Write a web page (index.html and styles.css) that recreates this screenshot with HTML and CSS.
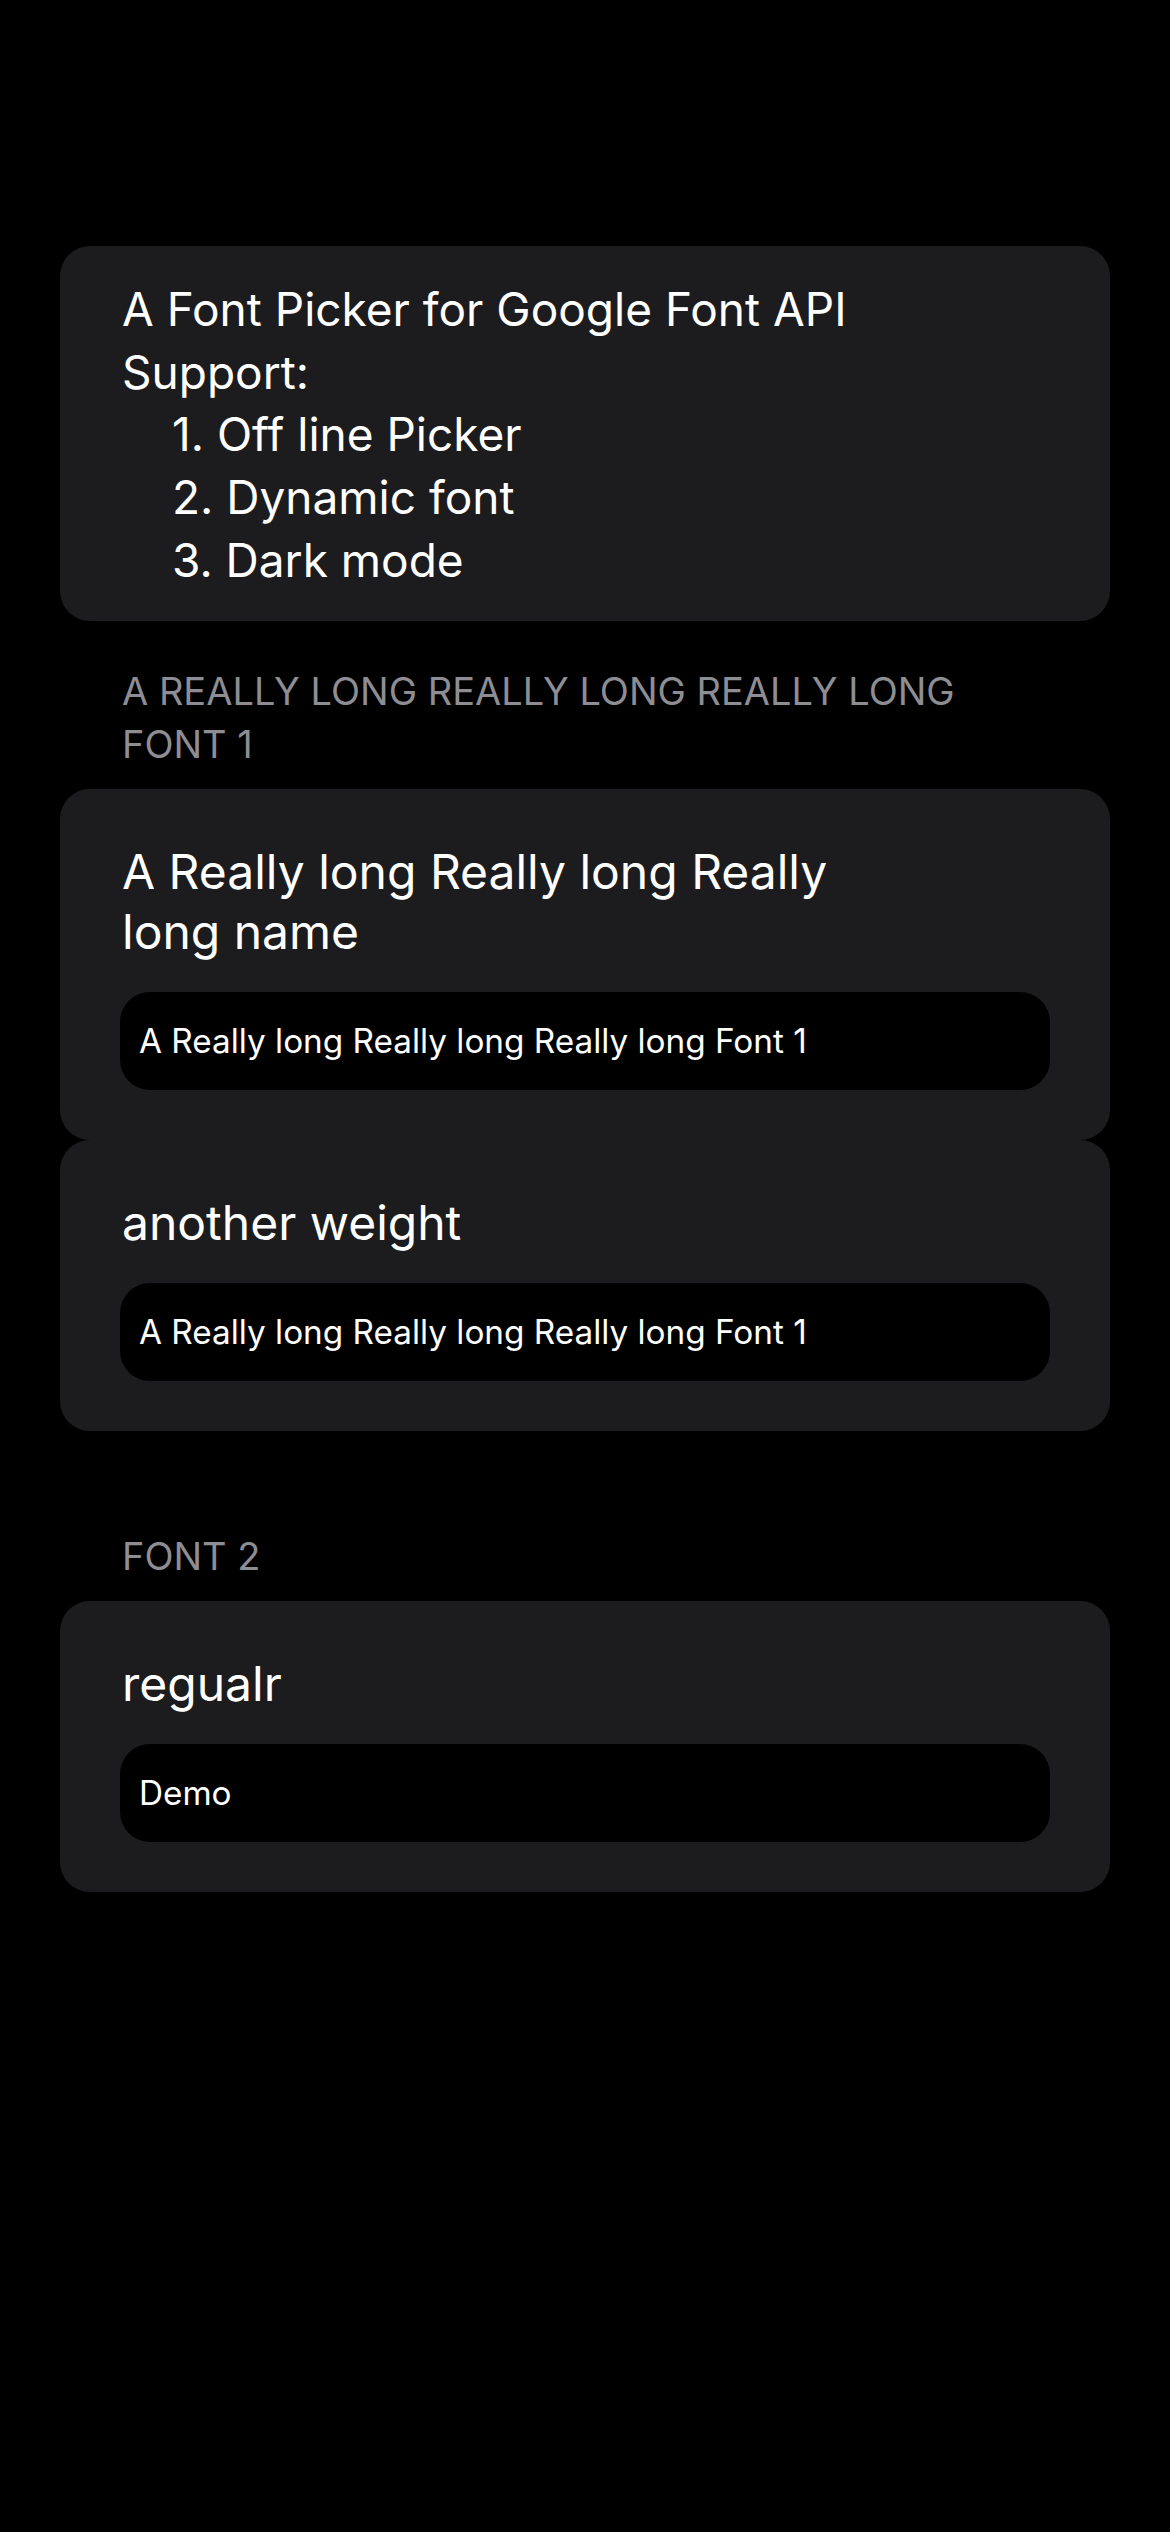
FILE: index.html
```html
<!DOCTYPE html>
<html lang="en">
<head>
<meta charset="utf-8">
<title>Font Picker</title>
<link rel="stylesheet" href="styles.css">
</head>
<body>
<main class="page">
  <section class="card intro">
    <p class="intro-line">A Font Picker for Google Font API</p>
    <p class="intro-line">Support:</p>
    <ol class="intro-list">
      <li>1. Off line Picker</li>
      <li>2. Dynamic font</li>
      <li>3. Dark mode</li>
    </ol>
  </section>

  <h2 class="section-header">A REALLY LONG REALLY LONG REALLY LONG FONT 1</h2>
  <section class="card font-card">
    <h3 class="font-title">A Really long Really long Really long name</h3>
    <div class="demo-field">A Really long Really long Really long Font 1</div>
  </section>
  <section class="card font-card">
    <h3 class="font-title">another weight</h3>
    <div class="demo-field">A Really long Really long Really long Font 1</div>
  </section>

  <h2 class="section-header section-gap">FONT 2</h2>
  <section class="card font-card">
    <h3 class="font-title">regualr</h3>
    <div class="demo-field">Demo</div>
  </section>
</main>
</body>
</html>
```

FILE: styles.css
```css
html, body {
  margin: 0;
  padding: 0;
  background: #000;
}

body {
  font-family: Inter, "Noto Sans", "Liberation Sans", sans-serif;
  color: #fff;
  min-height: 2532px;
}

.page {
  padding-top: 246px;
  display: flex;
  flex-direction: column;
}

.card {
  margin: 0 60px;
  background: #1c1c1e;
  border-radius: 30px;
}

.intro {
  padding: 32px 62px 29px;
  font-size: 46px;
  line-height: 62.7px;
}

.intro-line {
  margin: 0;
}

.intro-list {
  margin: 0;
  padding: 0 0 0 50px;
  list-style: none;
}

.section-header {
  margin: 44px 120px 18px 122px;
  font-size: 38px;
  line-height: 53px;
  font-weight: 400;
  color: #8d8d93;
}

.section-gap {
  margin-top: 99px;
}

.font-card {
  padding: 53px 60px 50px;
}

.font-title {
  margin: 0 0 30px 2px;
  max-width: 760px;
  font-size: 48px;
  line-height: 60px;
  font-weight: 400;
}

.demo-field {
  height: 98px;
  display: flex;
  align-items: center;
  padding-left: 19px;
  background: #000;
  border-radius: 30px;
  font-size: 33.3px;
}
```
